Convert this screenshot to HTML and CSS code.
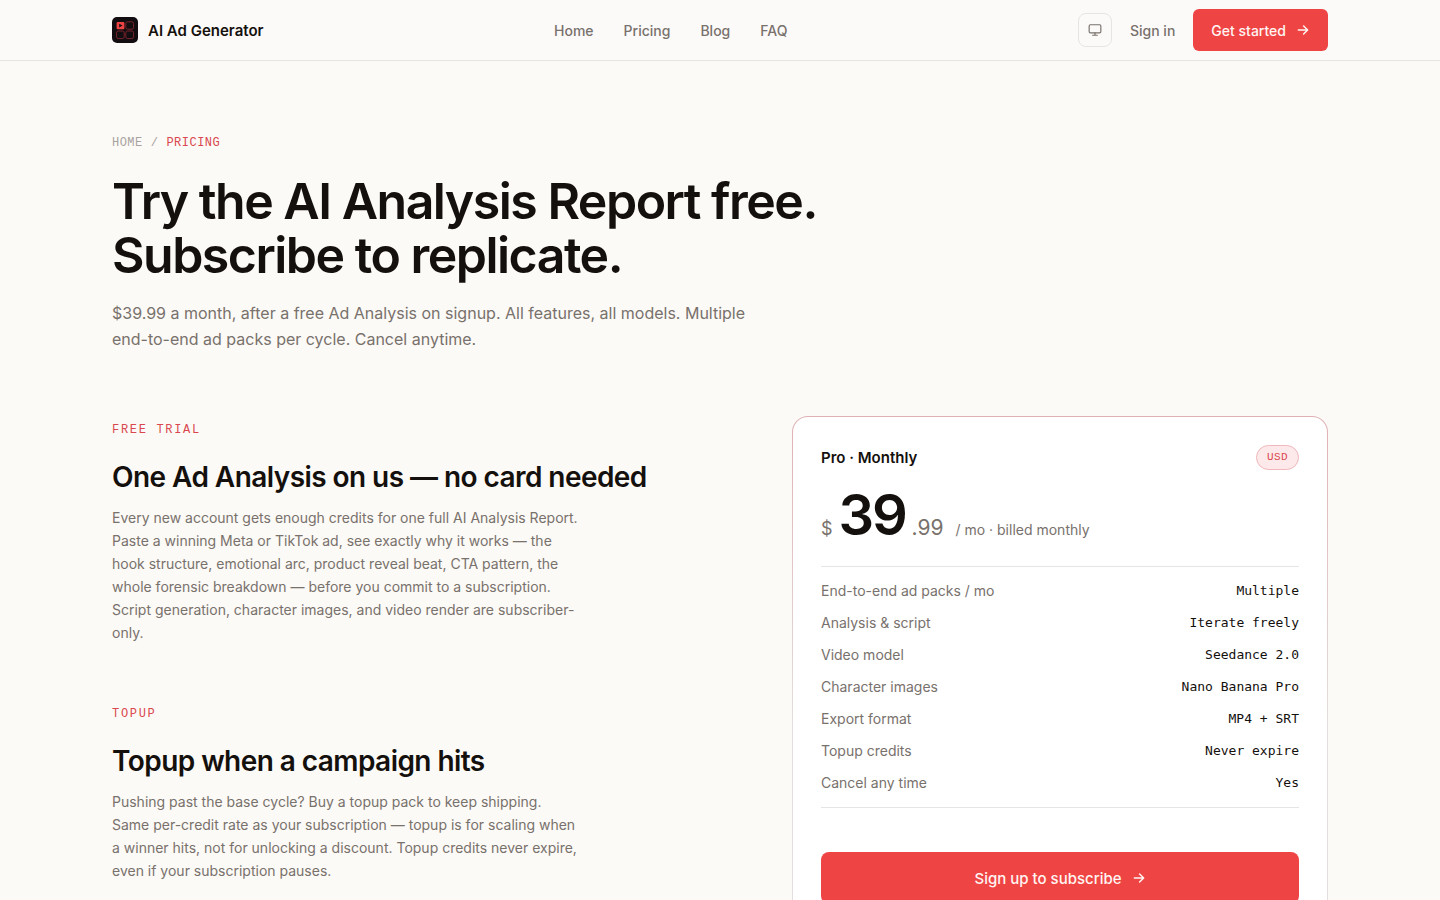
FILE: index.html
```html
<!DOCTYPE html>
<html lang="en">
<head>
<meta charset="utf-8">
<meta name="viewport" content="width=device-width, initial-scale=1">
<title>Pricing · AI Ad Generator</title>
<link rel="stylesheet" href="styles.css">
</head>
<body>
<header class="site-header">
  <div class="container header-row">
    <a class="brand" href="#">
      <svg class="brand-mark" viewBox="0 0 26 26" aria-hidden="true">
        <rect width="26" height="26" rx="5" fill="#120d10"/>
        <rect x="4.6" y="5" width="7.8" height="7.2" rx="1" fill="#ef4444"/>
        <path d="M7.2 6.7v3.8l3.4-1.9z" fill="#120d10"/>
        <g fill="none" stroke="#7a242c" stroke-width="1">
          <rect x="13.8" y="4.8" width="7.8" height="7.4" rx="1.8"/>
          <rect x="4.6" y="14" width="7.6" height="7.6" rx="1.8"/>
          <rect x="13.8" y="14" width="7.8" height="7.6" rx="1.8"/>
        </g>
      </svg>
      <span>AI Ad Generator</span>
    </a>
    <nav class="nav" aria-label="Main">
      <a href="#">Home</a>
      <a href="#">Pricing</a>
      <a href="#">Blog</a>
      <a href="#">FAQ</a>
    </nav>
    <div class="actions">
      <button class="theme-button" type="button" aria-label="Theme">
        <svg viewBox="0 0 24 24" width="14" height="14" aria-hidden="true"><rect x="2" y="3" width="20" height="14" rx="2"/><path d="M8 21h8M12 17v4"/></svg>
      </button>
      <a class="sign-in" href="#">Sign in</a>
      <a class="button button-small" href="#"><span>Get started</span>
        <svg class="arrow" viewBox="0 0 24 24" aria-hidden="true"><path d="M4 12h16M13 5l7 7-7 7"/></svg>
      </a>
    </div>
  </div>
</header>
<main class="container">
  <section class="hero">
    <nav class="crumbs" aria-label="Breadcrumb"><a href="#">Home</a><span>/</span><span class="current">Pricing</span></nav>
    <h1>Try the AI Analysis Report free.<br>Subscribe to replicate.</h1>
    <p class="lead">$39.99 a month, after a free Ad Analysis on signup. All features, all models. Multiple end-to-end ad packs per cycle. Cancel anytime.</p>
  </section>
  <div class="columns">
    <div class="stories">
      <section>
        <p class="eyebrow">Free trial</p>
        <h2>One Ad Analysis on us — no card needed</h2>
        <p class="copy">Every new account gets enough credits for one full AI Analysis Report.<br> Paste a winning Meta or TikTok ad, see exactly why it works — the<br> hook structure, emotional arc, product reveal beat, CTA pattern, the<br> whole forensic breakdown — before you commit to a subscription.<br> Script generation, character images, and video render are subscriber-<br>only.</p>
      </section>
      <section>
        <p class="eyebrow">Topup</p>
        <h2>Topup when a campaign hits</h2>
        <p class="copy">Pushing past the base cycle? Buy a topup pack to keep shipping.<br> Same per-credit rate as your subscription — topup is for scaling when<br> a winner hits, not for unlocking a discount. Topup credits never expire,<br> even if your subscription pauses.</p>
      </section>
    </div>
    <aside class="plan">
      <div class="plan-head"><h3>Pro · Monthly</h3><span class="badge">USD</span></div>
      <p class="price"><span class="currency">$</span><span class="amount">39</span><span class="cents">.99</span><span class="period">/ mo · billed monthly</span></p>
      <dl class="features">
        <div><dt>End-to-end ad packs / mo</dt><dd>Multiple</dd></div>
        <div><dt>Analysis &amp; script</dt><dd>Iterate freely</dd></div>
        <div><dt>Video model</dt><dd>Seedance 2.0</dd></div>
        <div><dt>Character images</dt><dd>Nano Banana Pro</dd></div>
        <div><dt>Export format</dt><dd>MP4 + SRT</dd></div>
        <div><dt>Topup credits</dt><dd>Never expire</dd></div>
        <div><dt>Cancel any time</dt><dd>Yes</dd></div>
      </dl>
      <a class="button button-large" href="#"><span>Sign up to subscribe</span>
        <svg class="arrow" viewBox="0 0 24 24" aria-hidden="true"><path d="M4 12h16M13 5l7 7-7 7"/></svg>
      </a>
    </aside>
  </div>
</main>
</body>
</html>
```
FILE: styles.css
```css
:root {
  --ink: #14100d;
  --muted: #78716c;
  --faint: #a8a29e;
  --red: #ef4444;
  --red-text: #d9484e;
  --line: #e7e5e4;
  --mono: "Liberation Mono", monospace;
}
*, *::before, *::after { box-sizing: border-box; }
body {
  margin: 0;
  background: #fcfaf6;
  color: var(--ink);
  font-family: Inter, "Liberation Sans", sans-serif;
}
h1, h2, h3, p, dl, dd { margin: 0; }
a { color: inherit; text-decoration: none; }
.container { max-width: 1264px; margin: 0 auto; padding: 0 24px; }

.site-header { background: #fcfaf9; border-bottom: 1px solid var(--line); }
.header-row {
  display: flex;
  align-items: center;
  justify-content: space-between;
  min-height: 60px;
}
.brand { display: flex; align-items: center; gap: 10px; font-size: 15px; font-weight: 600; }
.brand-mark { width: 26px; height: 26px; }
.nav { display: flex; gap: 30px; font-size: 14px; font-weight: 500; color: var(--muted); }
.actions {
  display: flex;
  align-items: center;
  gap: 18px;
  font-size: 14px;
  font-weight: 500;
  color: var(--muted);
}
.theme-button {
  display: grid;
  place-items: center;
  width: 34px;
  height: 34px;
  padding: 0;
  border: 1px solid var(--line);
  border-radius: 8px;
  background: transparent;
  color: var(--muted);
}
.theme-button svg, .arrow {
  fill: none;
  stroke: currentColor;
  stroke-width: 2;
  stroke-linecap: round;
  stroke-linejoin: round;
}
.arrow { width: 14px; height: 14px; stroke-width: 2.5; }
.button {
  display: flex;
  align-items: center;
  justify-content: center;
  gap: 10px;
  background: var(--red);
  color: #fff5f2;
  font-weight: 500;
}
.button-small { min-height: 42px; padding: 0 18px; border-radius: 6px; }
.button-large { min-height: 52px; margin-top: 44px; border-radius: 8px; font-size: 15px; }

.hero { padding: 73px 0 64px; }
.crumbs {
  display: flex;
  gap: 8px;
  font: 12px/18px var(--mono);
  letter-spacing: 0.04em;
  text-transform: uppercase;
  color: var(--faint);
}
.current, .eyebrow { color: var(--red-text); }
h1 {
  margin-top: 22px;
  font-size: 50px;
  line-height: 54px;
  font-weight: 600;
  letter-spacing: -0.03em;
}
.lead { max-width: 660px; margin-top: 18px; font-size: 16px; line-height: 26px; color: var(--muted); }

.columns {
  display: grid;
  grid-template-columns: minmax(0, 616fr) minmax(0, 536fr);
  gap: 64px;
  align-items: start;
  padding-bottom: 80px;
}
.stories { display: grid; gap: 61px; padding-top: 5px; }
.eyebrow { font: 12px/18px var(--mono); letter-spacing: 0.14em; text-transform: uppercase; }
h2 { margin-top: 21px; font-size: 28px; line-height: 34px; font-weight: 600; letter-spacing: -0.02em; }
.copy { margin-top: 12px; font-size: 14px; line-height: 23px; color: var(--muted); }

.plan {
  padding: 28px;
  border: 1px solid transparent;
  border-radius: 16px;
  background:
    linear-gradient(#fff, #fff) padding-box,
    linear-gradient(#e0b0b4, #e3dedd 60%) border-box;
}
.plan-head { display: flex; align-items: center; justify-content: space-between; }
h3 { font-size: 15px; line-height: 24px; font-weight: 600; }
.badge {
  padding: 0 10px;
  border: 1px solid #f0b8bc;
  border-radius: 13px;
  background: #fde9e9;
  font: 11px/23px var(--mono);
  letter-spacing: 0.04em;
  color: var(--red-text);
}
.price {
  display: flex;
  align-items: baseline;
  margin-top: 17px;
  padding-bottom: 23px;
  border-bottom: 1px solid var(--line);
  line-height: 1;
  color: var(--muted);
}
.currency { margin-right: 6px; font-size: 18px; }
.amount { font-size: 56px; font-weight: 600; letter-spacing: -0.04em; color: var(--ink); }
.cents { margin-left: 6px; font-size: 21px; }
.period { margin-left: 12px; font-size: 14px; }
.features { padding: 8px 0; border-bottom: 1px solid var(--line); font-size: 14px; line-height: 32px; }
.features div { display: flex; justify-content: space-between; gap: 16px; }
.features dt { color: var(--muted); }
.features dd { font-family: "DejaVu Sans Mono", monospace; font-size: 13px; }

@media (max-width: 900px) {
  .nav, .copy br { display: none; }
  .columns { grid-template-columns: minmax(0, 1fr); }
}
```
